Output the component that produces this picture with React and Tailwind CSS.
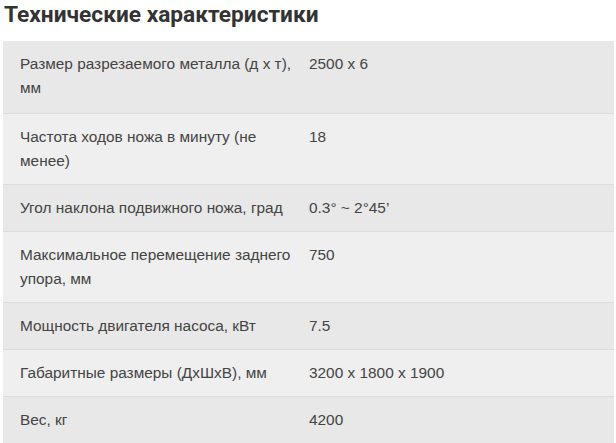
import React from 'react';

const specs = [
  ['Размер разрезаемого металла (д х т), мм', '2500 x 6'],
  ['Частота ходов ножа в минуту (не менее)', '18'],
  ['Угол наклона подвижного ножа, град', '0.3° ~ 2°45’'],
  ['Максимальное перемещение заднего упора, мм', '750'],
  ['Мощность двигателя насоса, кВт', '7.5'],
  ['Габаритные размеры (ДхШхВ), мм', '3200 x 1800 x 1900'],
  ['Вес, кг', '4200'],
];

export default function App() {
  return (
    <div className="w-[616px] h-[443px] overflow-hidden bg-white">
      <h2 className="pl-[4px] h-[41px] font-['Roboto',sans-serif] font-bold text-[22.7px] leading-[30px] text-[#333]">
        Технические характеристики
      </h2>
      <div className="ml-[3px] w-[611px] font-['Liberation_Sans',Arial,sans-serif] text-[15.4px] leading-[24px] text-[#444]">
        {specs.map(([name, value], i) => (
          <div
            key={name}
            className={`flex border-b border-[#dcdcdc] ${i % 2 === 0 ? 'bg-[#e8e8e8]' : 'bg-[#efefef]'}`}
          >
            <div className={`w-[300px] shrink-0 pl-[17px] ${i === 0 ? 'pt-[11px] pb-[13px]' : 'py-[11px]'}`}>{name}</div>
            <div className="flex-1 pl-[6px] pr-4 pt-[11px] pb-[11px]">{value}</div>
          </div>
        ))}
      </div>
    </div>
  );
}
